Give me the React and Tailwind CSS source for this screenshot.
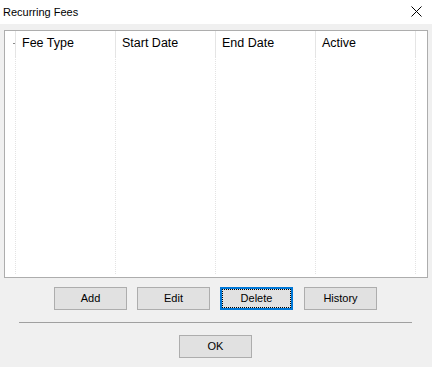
import React from 'react';

// Columnas del listado (la primera es la columna estrecha sin título)
const columns = [
  { key: 'feeType', label: 'Fee Type' },
  { key: 'startDate', label: 'Start Date' },
  { key: 'endDate', label: 'End Date' },
  { key: 'active', label: 'Active' },
];

const font = { fontFamily: '"Liberation Sans", Arial, sans-serif' };

const WinButton = ({ children, focused = false, className = '' }) => (
  <button
    type="button"
    className={`block w-[73px] h-[23px] bg-[#e1e1e1] text-[11px] text-black leading-none ${
      focused ? 'border-2 border-[#0078d7] p-0' : 'border border-[#adadad]'
    } ${className}`}
  >
    {focused ? (
      <span className="flex items-center justify-center w-full h-full border border-dotted border-black">
        {children}
      </span>
    ) : (
      children
    )}
  </button>
);

const App = () => {
  return (
    <div className="w-[432px] h-[367px] bg-[#f0f0f0] flex flex-col" style={font}>
      {/* Barra de título */}
      <div className="h-[24px] bg-white flex items-center justify-between pl-[3px] pr-[10px]">
        <span className="text-[11px] text-black">Recurring Fees</span>
        <svg width="11" height="11" viewBox="0 0 11 11" className="mb-[1px]">
          <path d="M0.5 0.5 L10.5 10.5 M10.5 0.5 L0.5 10.5" stroke="#000" strokeWidth="1" />
        </svg>
      </div>

      <div className="px-[4px] pt-[6px]">
        {/* Lista */}
        <div className="h-[248px] bg-white border border-[#adadad] flex flex-col">
          <div className="h-[25px] flex shrink-0">
            <div className="w-[11px] border-r border-[#e5e5e5] relative">
              <span className="absolute right-[0px] top-[12px] w-[2px] h-[1px] bg-[#8a8a8a]" />
            </div>
            {columns.map((c) => (
              <div
                key={c.key}
                className="w-[100px] border-r border-[#e5e5e5] pl-[6px] flex items-center text-[12.5px] text-black"
              >
                {c.label}
              </div>
            ))}
          </div>
          <div className="flex flex-1 pb-[3px]">
            <div className="w-[11px] border-r border-dotted border-[#e3e3e3]" />
            {columns.map((c) => (
              <div key={c.key} className="w-[100px] border-r border-dotted border-[#e3e3e3]" />
            ))}
          </div>
        </div>

        {/* Botones */}
        <div className="flex items-start mt-[9px] pl-[50px] gap-[10px]">
          <WinButton>Add</WinButton>
          <WinButton>Edit</WinButton>
          <WinButton focused>Delete</WinButton>
          <WinButton className="ml-[1px]">History</WinButton>
        </div>
      </div>

      <div className="mx-[19px] mt-[12px] w-[393px] h-[1px] bg-[#a0a0a0]" />

      <div className="flex justify-center mt-[12px]">
        <WinButton className="ml-[-1px]">OK</WinButton>
      </div>
    </div>
  );
};

export default App;
